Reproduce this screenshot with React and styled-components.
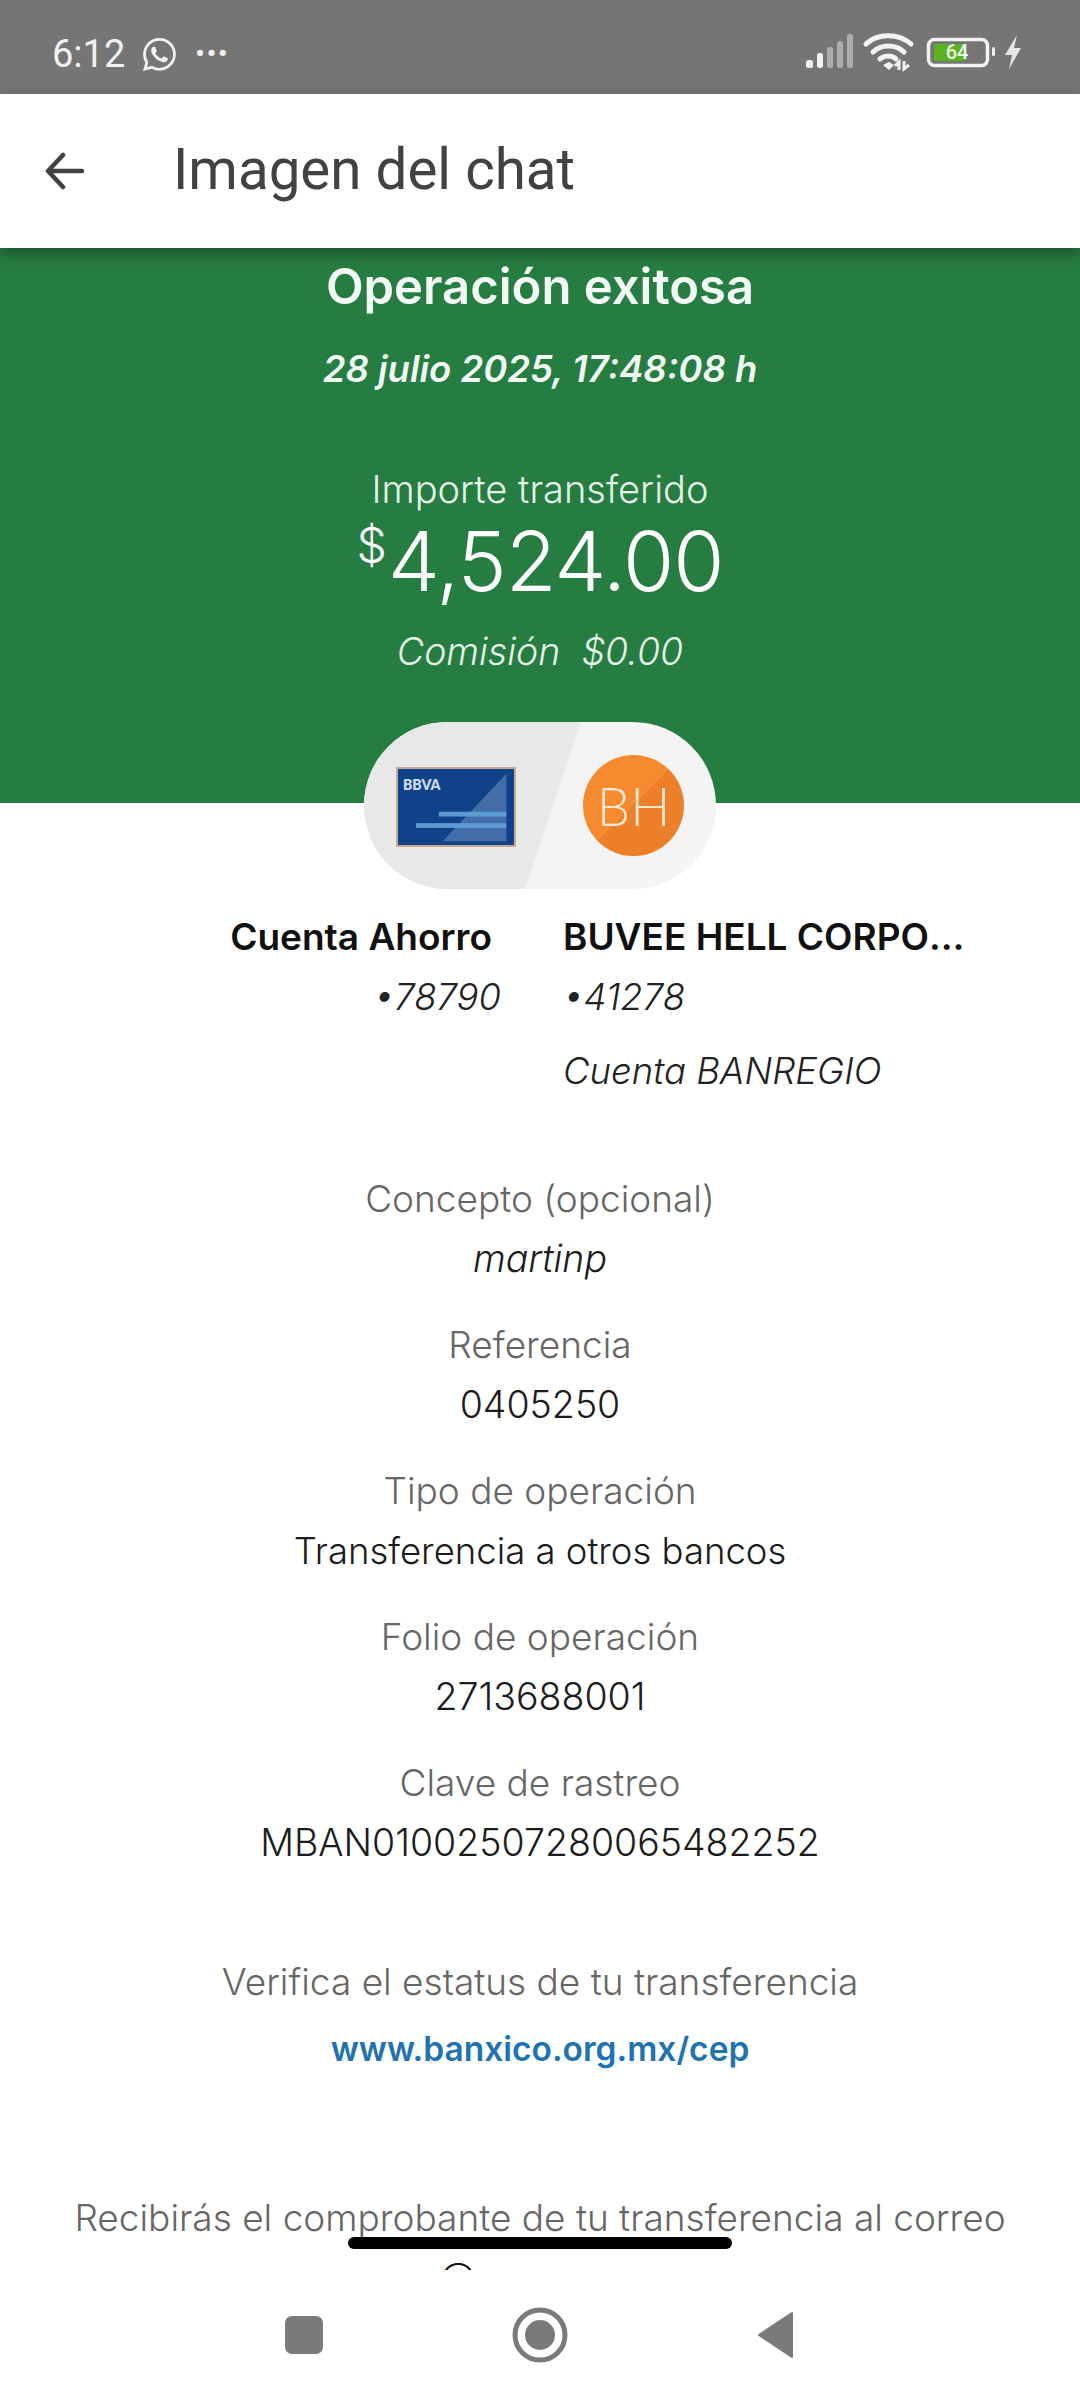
import React from "react";
import styled, { createGlobalStyle } from "styled-components";
import { BsWhatsapp } from "react-icons/bs";

const Global = createGlobalStyle`
  html, body { margin: 0; padding: 0; background: #fff; }
  * { box-sizing: border-box; }
`;
const Screen = styled.div`
  position: relative; width: 1080px; height: 2400px; display: flex; flex-direction: column;
  overflow: hidden; background: #fff; font-family: Inter, "Open Sans", sans-serif;
`;
const StatusBar = styled.div`
  height: 94px; flex: none; background: #757575; display: flex; align-items: center;
  justify-content: space-between; padding: 14px 48px 0 52px; color: #f1f1f1;
`;
const StatusGroup = styled.div`display: flex; align-items: center; gap: ${p => p.$gap || 0}px;`;
const Clock = styled.span`font: 400 38px Roboto, sans-serif;`;
const Dots = styled.span`font: 700 26px Roboto, sans-serif; letter-spacing: 2px; margin-left: 1px; margin-top: -2px;`;
const Toolbar = styled.header`
  height: 154px; flex: none; background: #fff; display: flex; align-items: center; padding-left: 44px;
  position: relative; z-index: 2; box-shadow: 0 6px 14px rgba(0,0,0,.35);
`;
const ToolbarTitle = styled.h1`
  margin: 0 0 2px 87px; font: 400 56.5px Roboto, sans-serif; color: #424242; letter-spacing: 0;
`;
const Body = styled.main`flex: 1; min-height: 0; overflow: hidden;`;
const Hero = styled.section`
  height: 555px; background: #267d42; color: #fff; display: flex; flex-direction: column; align-items: center;
  padding-top: 11px; text-align: center;
`;
const HeroTitle = styled.div`font-size: 49px; font-weight: 600; line-height: 56px; color: #f2f8f4;`;
const HeroDate = styled.div`font-size: 36.5px; font-weight: 600; font-style: italic; line-height: 46px; margin-top: 31px; color: #f2f8f4;`;
const HeroLabel = styled.div`font-size: 38px; font-weight: 300; line-height: 46px; margin-top: 74px; color: #e6f2ea;`;
const Amount = styled.div`
  display: flex; align-items: flex-start; font: 300 83px Inter, sans-serif; line-height: 90px; margin-top: 4px; letter-spacing: -1px;
`;
const Currency = styled.span`font-size: 48px; line-height: 58px; margin-right: 2px;`;
const Fee = styled.div`font-size: 37.5px; font-weight: 300; font-style: italic; line-height: 46px; margin-top: 23px; color: #e6f2ea; white-space: pre;`;
const PillWrap = styled.div`display: flex; justify-content: center; margin-top: -81px;`;
const Pill = styled.div`
  position: relative; width: 352px; height: 167px; border-radius: 84px; overflow: hidden; background: #f4f4f4;
  display: flex; align-items: center; padding-left: 32px;
`;
const PillShade = styled.div`
  position: absolute; inset: 0; background: #e8e8e8; clip-path: polygon(0 0, 217px 0, 161px 100%, 0 100%);
`;
const BankCard = styled.div`
  position: relative; width: 120px; height: 80px; flex: none; background: #0f4289; border: 2px solid #c9a98f; overflow: hidden; margin-top: 3px;
`;
const CardMark = styled.span`
  position: absolute; left: 5px; top: 7px; font: 800 14px Lato, sans-serif; color: #c6d8ec; letter-spacing: 0;
`;
const CardArt = styled.svg`position: absolute; inset: 0; width: 100%; height: 100%;`;
const Avatar = styled.div`
  position: relative; width: 101px; height: 101px; margin-left: 67px; border-radius: 50%;
  background: linear-gradient(135deg, #f58a2e 50%, #ee7f29 50%); color: #fbe8d8;
  display: flex; align-items: center; justify-content: center; font: 300 53px Lato, sans-serif;
`;
const Parties = styled.div`display: grid; grid-template-columns: 501px 412px; column-gap: 62px; margin-top: 25px;`;
const PartyLeft = styled.div`display: flex; flex-direction: column; align-items: flex-end;`;
const PartyRight = styled.div`display: flex; flex-direction: column; align-items: flex-start; min-width: 0;`;
const PartyName = styled.div`
  font-size: 37px; font-weight: 600; line-height: 46px; color: #111; white-space: nowrap; overflow: hidden;
  text-overflow: ellipsis; max-width: 100%; padding-right: ${p => p.$pad || 0}px;
`;
const PartyText = styled.div`font-size: 36.5px; font-weight: 300; font-style: italic; line-height: 46px; margin-top: ${p => p.$mt}px; color: #222;`;
const Details = styled.div`display: flex; flex-direction: column; align-items: center; margin-top: 82px;`;
const Label = styled.div`font-size: 37px; font-weight: 300; line-height: 46px; color: #666; margin-top: ${p => p.$mt || 0}px;`;
const Value = styled.div`font-size: ${p => p.$size || 37.5}px; font-weight: 300; line-height: 46px; margin-top: 14px; color: #1c1c1c; font-style: ${p => p.$italic ? "italic" : "normal"};`;
const Verify = styled.div`font-size: 37px; font-weight: 300; line-height: 46px; color: #666; margin-top: 93px;`;
const LinkText = styled.a`font-size: 33.5px; font-weight: 600; line-height: 46px; color: #1e73b4; margin-top: 21px; text-decoration: none;`;
const Notice = styled.div`font-size: 37px; font-weight: 300; line-height: 58px; color: #666; margin-top: 117px; text-align: center; white-space: nowrap;`;
const NoticeTail = styled.span`display: inline-block; padding-right: 164px; color: #111;`;
const NavBar = styled.nav`
  height: 130px; flex: none; background: #fff; display: flex; align-items: flex-start; padding-top: 40px;
  justify-content: center; gap: 0; position: relative;
`;
const NavSlot = styled.div`width: 236px; height: 50px; display: flex; align-items: center; justify-content: center;`;
const Handle = styled.div`
  position: absolute; left: 348px; top: 2237px; width: 384px; height: 12px; border-radius: 6px; background: #000;
`;

export default function App() {
  return (
    <Screen>
      <Global />
      <StatusBar>
        <StatusGroup $gap={18}>
          <Clock>6:12</Clock>
          <BsWhatsapp size={33} />
          <Dots>•••</Dots>
        </StatusGroup>
        <StatusGroup>
          <svg width="226" height="44" viewBox="0 0 226 44" fill="none">
            <rect x="0" y="28" width="7" height="8" rx="2.5" fill="#f3f3f3" />
            <rect x="11" y="21" width="6" height="15" rx="2.5" fill="#f3f3f3" />
            <rect x="21" y="15" width="6" height="21" rx="2.5" fill="#acacac" />
            <rect x="31" y="9" width="6" height="27" rx="2.5" fill="#acacac" />
            <rect x="41" y="2" width="6" height="34" rx="2.5" fill="#acacac" />
            <g stroke="#f3f3f3" strokeWidth="5" strokeLinecap="round" fill="none">
              <path d="M60 12 C 71 1, 93 1, 105 12" />
              <path d="M67 20 C 75 12, 90 12, 98 20" />
              <path d="M74 27 C 79 23, 86 23, 90 27" />
            </g>
            <path d="M77 33 L83 30 L88 33 L83 38 Z" fill="#f3f3f3" />
            <path d="M93 38 V30 L89 34 M98 29 V37 L103 33" stroke="#f3f3f3" strokeWidth="3" fill="none" />
            <rect x="122.5" y="2.5" width="59" height="26" rx="6" stroke="#f3f3f3" strokeWidth="3.5" transform="translate(0 5)" />
            <rect x="128" y="12" width="31" height="17" fill="#58b31e" />
            <text x="151" y="27" textAnchor="middle" fontFamily="Roboto, sans-serif" fontSize="20" fontWeight="500" fill="#f1f7ea">64</text>
            <rect x="186" y="15" width="3" height="9" rx="1.5" fill="#f3f3f3" />
            <path d="M211 3 L199 23 L206 23 L203 37 L215 16 L208 16 Z" fill="#e6e6e6" />
          </svg>
        </StatusGroup>
      </StatusBar>
      <Toolbar>
        <svg width="42" height="38" viewBox="0 0 42 38" fill="none" stroke="#424242" strokeWidth="4.5" strokeLinecap="round" strokeLinejoin="round">
          <path d="M38 19 H5 M19 3 L4 19 L19 35" />
        </svg>
        <ToolbarTitle>Imagen del chat</ToolbarTitle>
      </Toolbar>
      <Body>
        <Hero>
          <HeroTitle>Operación exitosa</HeroTitle>
          <HeroDate>28 julio 2025, 17:48:08 h</HeroDate>
          <HeroLabel>Importe transferido</HeroLabel>
          <Amount><Currency>$</Currency>4,524.00</Amount>
          <Fee>Comisión  $0.00</Fee>
        </Hero>
        <PillWrap>
          <Pill>
            <PillShade />
            <BankCard>
              <CardArt viewBox="0 0 120 80">
                <polygon points="113,5 113,76 46,76" fill="#5a82b5" opacity=".7" />
                <rect x="42" y="45" width="71" height="5" fill="#5c9bd0" />
                <rect x="18" y="57" width="95" height="5" fill="#5c9bd0" />
              </CardArt>
              <CardMark>BBVA</CardMark>
            </BankCard>
            <Avatar>BH</Avatar>
          </Pill>
        </PillWrap>
        <Parties>
          <PartyLeft>
            <PartyName $pad={9}>Cuenta Ahorro</PartyName>
            <PartyText $mt={14}>•78790</PartyText>
          </PartyLeft>
          <PartyRight>
            <PartyName>BUVEE HELL CORPORATIVO SA</PartyName>
            <PartyText $mt={14}>•41278</PartyText>
            <PartyText $mt={28}>Cuenta BANREGIO</PartyText>
          </PartyRight>
        </Parties>
        <Details>
          <Label>Concepto (opcional)</Label>
          <Value $italic>martinp</Value>
          <Label $mt={40}>Referencia</Label>
          <Value>0405250</Value>
          <Label $mt={40}>Tipo de operación</Label>
          <Value $size={36.5}>Transferencia a otros bancos</Value>
          <Label $mt={40}>Folio de operación</Label>
          <Value>2713688001</Value>
          <Label $mt={40}>Clave de rastreo</Label>
          <Value>MBAN01002507280065482252</Value>
          <Verify>Verifica el estatus de tu transferencia</Verify>
          <LinkText>www.banxico.org.mx/cep</LinkText>
          <Notice>Recibirás el comprobante de tu transferencia al correo<br /><NoticeTail>@</NoticeTail></Notice>
        </Details>
      </Body>
      <NavBar>
        <NavSlot>
          <svg width="40" height="40" viewBox="0 0 40 40"><rect x="1" y="1" width="38" height="38" rx="7" fill="#7a7a7a" /></svg>
        </NavSlot>
        <NavSlot>
          <svg width="56" height="56" viewBox="0 0 56 56"><circle cx="28" cy="28" r="25" fill="none" stroke="#7a7a7a" strokeWidth="5" /><circle cx="28" cy="28" r="15" fill="#7a7a7a" /></svg>
        </NavSlot>
        <NavSlot>
          <svg width="38" height="48" viewBox="0 0 38 48"><path d="M35 2 V46 L2 24 Z" fill="#7a7a7a" stroke="#7a7a7a" strokeWidth="2" strokeLinejoin="round" /></svg>
        </NavSlot>
      </NavBar>
      <Handle />
    </Screen>
  );
}
